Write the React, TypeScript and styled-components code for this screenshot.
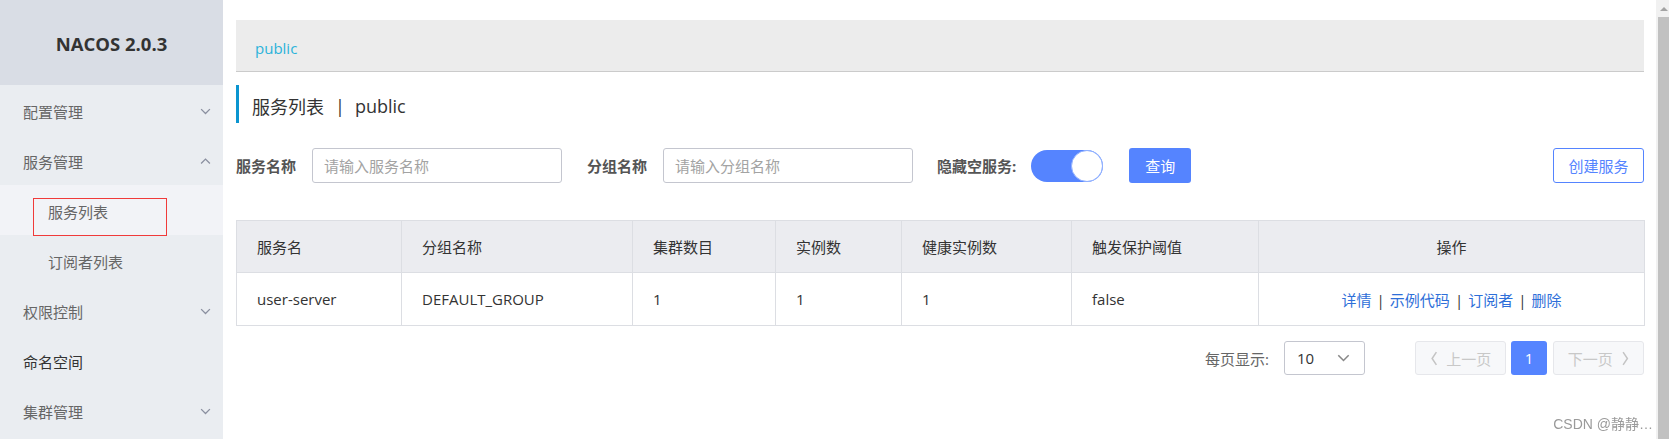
import React from "react";
import styled, { createGlobalStyle } from "styled-components";

const GlobalStyle = createGlobalStyle`
  html, body {
    margin: 0;
    padding: 0;
    height: 100%;
    overflow: hidden;
  }
  body {
    font-family: "Open Sans", "Noto Sans CJK SC", sans-serif;
    color: #333;
    background: #fff;
  }
  * {
    box-sizing: border-box;
  }
`;

type MenuEntry = {
  label: string;
  arrow?: "up" | "down";
  sub?: boolean;
  active?: boolean;
  dark?: boolean;
};

const menu: MenuEntry[] = [
  { label: "配置管理", arrow: "down" },
  { label: "服务管理", arrow: "up" },
  { label: "服务列表", sub: true, active: true },
  { label: "订阅者列表", sub: true },
  { label: "权限控制", arrow: "down" },
  { label: "命名空间", dark: true },
  { label: "集群管理", arrow: "down" },
];

const columns = [
  { title: "服务名", width: 165 },
  { title: "分组名称", width: 231 },
  { title: "集群数目", width: 143 },
  { title: "实例数", width: 126 },
  { title: "健康实例数", width: 170 },
  { title: "触发保护阈值", width: 187 },
  { title: "操作", width: 386, center: true },
];

const rows = [["user-server", "DEFAULT_GROUP", "1", "1", "1", "false"]];

const ops = ["详情", "示例代码", "订阅者", "删除"];

const Chevron = ({
  dir,
  size = 10,
  color = "#8b90a0",
  stroke = 1.2,
}: {
  dir: "up" | "down" | "left" | "right";
  size?: number;
  color?: string;
  stroke?: number;
}) => {
  const pts: Record<string, string> = {
    down: "1,1 5,5 9,1",
    up: "1,5 5,1 9,5",
    left: "5,1 1,7 5,13",
    right: "1,1 5,7 1,13",
  };
  const vertical = dir === "left" || dir === "right";
  return (
    <svg
      width={vertical ? size * 0.5 + 1 : size}
      height={vertical ? size : size * 0.6}
      viewBox={vertical ? "0 0 6 14" : "0 0 10 6"}
      fill="none"
    >
      <polyline points={pts[dir]} stroke={color} strokeWidth={stroke} />
    </svg>
  );
};

const App = () => {
  return (
    <>
      <GlobalStyle />
      <Page>
        <Sidebar>
          <Brand>NACOS 2.0.3</Brand>
          <Menu>
            {menu.map((m) => (
              <MenuItem key={m.label} $sub={m.sub} $active={m.active} $dark={m.dark}>
                <span>{m.label}</span>
                {m.arrow && <Chevron dir={m.arrow} size={11} />}
                {m.active && <Marker />}
              </MenuItem>
            ))}
          </Menu>
        </Sidebar>

        <Main>
          <Breadcrumb>public</Breadcrumb>
          <Title>
            服务列表<TitleSep>|</TitleSep>public
          </Title>

          <Filters>
            <Label>服务名称</Label>
            <TextInput placeholder="请输入服务名称" />
            <Label $gap={25}>分组名称</Label>
            <TextInput placeholder="请输入分组名称" />
            <Label $gap={24}>隐藏空服务:</Label>
            <Switch>
              <Knob />
            </Switch>
            <PrimaryButton>查询</PrimaryButton>
            <OutlineButton>创建服务</OutlineButton>
          </Filters>

          <Table>
            <colgroup>
              {columns.map((c) => (
                <Col key={c.title} $w={c.width} />
              ))}
            </colgroup>
            <thead>
              <tr>
                {columns.map((c) => (
                  <Th key={c.title} $center={c.center}>
                    {c.title}
                  </Th>
                ))}
              </tr>
            </thead>
            <tbody>
              {rows.map((r) => (
                <tr key={r[0]}>
                  {r.map((v, i) => (
                    <Td key={i}>{v}</Td>
                  ))}
                  <Td $center>
                    {ops.map((o, i) => (
                      <React.Fragment key={o}>
                        {i > 0 && <OpSep>|</OpSep>}
                        <OpLink>{o}</OpLink>
                      </React.Fragment>
                    ))}
                  </Td>
                </tr>
              ))}
            </tbody>
          </Table>

          <Pager>
            <PagerLabel>每页显示:</PagerLabel>
            <Select>
              <span>10</span>
              <Chevron dir="down" size={13} color="#888" />
            </Select>
            <PageButton $disabled $gap={50}>
              <Chevron dir="left" size={15} color="#c4c4c4" stroke={1.4} />
              上一页
            </PageButton>
            <PageNumber>1</PageNumber>
            <PageButton $disabled $gap={6}>
              下一页
              <Chevron dir="right" size={15} color="#c4c4c4" stroke={1.4} />
            </PageButton>
          </Pager>
        </Main>

        <Scrollbar>
          <ScrollArrow />
          <ScrollThumb />
        </Scrollbar>
      </Page>
      <Watermark>CSDN @静静…</Watermark>
    </>
  );
};

const Page = styled.div`
  display: flex;
  height: 100vh;
`;

const Sidebar = styled.div`
  width: 223px;
  flex-shrink: 0;
  background: #eaedf1;
`;

const Brand = styled.div`
  height: 85px;
  background: #d9dde5;
  display: flex;
  align-items: center;
  justify-content: center;
  font-size: 18.5px;
  font-weight: 700;
  color: #333;
  padding-top: 1px;
`;

const Menu = styled.div`
  display: flex;
  flex-direction: column;
`;

const MenuItem = styled.div<{ $sub?: boolean; $active?: boolean; $dark?: boolean }>`
  position: relative;
  height: 50px;
  display: flex;
  align-items: center;
  justify-content: space-between;
  padding: 3px 12px 0 ${(p) => (p.$sub ? 48 : 23)}px;
  font-size: 15px;
  color: ${(p) => (p.$dark ? "#333" : "#666")};
  background: ${(p) => (p.$active ? "#f2f3f7" : "transparent")};
`;

const Marker = styled.div`
  position: absolute;
  left: 33px;
  top: 13px;
  width: 134px;
  height: 38px;
  border: 1px solid #f03a3a;
`;

const Main = styled.div`
  flex: 1;
  min-width: 0;
  padding: 20px 12px 0 13px;
  display: flex;
  flex-direction: column;
`;

const Breadcrumb = styled.div`
  height: 52px;
  background: #ececec;
  border-bottom: 1px solid #cbcbcb;
  display: flex;
  align-items: center;
  padding: 4px 0 0 19px;
  font-size: 15px;
  color: #2bb3da;
`;

const Title = styled.div`
  margin-top: 13px;
  height: 38px;
  border-left: 3px solid #0b95d0;
  padding: 4px 0 0 13px;
  display: flex;
  align-items: center;
  font-size: 18px;
  color: #333;
`;

const TitleSep = styled.span`
  margin: 0 10px 0 11px;
`;

const Filters = styled.div`
  margin-top: 25px;
  height: 35px;
  display: flex;
  align-items: center;
`;

const Label = styled.span<{ $gap?: number }>`
  margin-left: ${(p) => p.$gap ?? 0}px;
  margin-right: 16px;
  font-size: 15px;
  font-weight: 700;
  color: #555;
`;

const TextInput = styled.input`
  width: 250px;
  height: 35px;
  border: 1px solid #c4c6cf;
  border-radius: 3px;
  padding: 0 11px;
  font-family: inherit;
  font-size: 15px;
  color: #333;
  outline: none;
  &::placeholder {
    color: #a3a3a3;
  }
`;

const Switch = styled.div`
  width: 72px;
  height: 32px;
  border-radius: 16px;
  background: #5584ff;
  display: flex;
  justify-content: flex-end;
  margin-left: -1px;
`;

const Knob = styled.div`
  width: 32px;
  height: 32px;
  border-radius: 50%;
  background: #fff;
  border: 1px solid #8fb0ff;
`;

const PrimaryButton = styled.button`
  margin-left: 26px;
  width: 62px;
  height: 35px;
  border: none;
  border-radius: 3px;
  background: #5584ff;
  color: #fff;
  font-family: inherit;
  font-size: 15px;
  padding: 0;
`;

const OutlineButton = styled.button`
  margin-left: auto;
  width: 91px;
  height: 35px;
  border: 1px solid #5584ff;
  border-radius: 3px;
  background: #fff;
  color: #5584ff;
  font-family: inherit;
  font-size: 15px;
  padding: 0;
`;

const Table = styled.table`
  margin-top: 37px;
  width: 100%;
  border-collapse: collapse;
  table-layout: fixed;
  font-size: 15px;
  color: #333;
`;

const Col = styled.col<{ $w: number }>`
  width: ${(p) => p.$w}px;
`;

const Th = styled.th<{ $center?: boolean }>`
  height: 52px;
  padding: 0 20px;
  background: #ebecf0;
  border: 1px solid #dcdee3;
  font-weight: 400;
  text-align: ${(p) => (p.$center ? "center" : "left")};
`;

const Td = styled.td<{ $center?: boolean }>`
  height: 53px;
  padding: 0 20px;
  border: 1px solid #dcdee3;
  text-align: ${(p) => (p.$center ? "center" : "left")};
`;

const OpLink = styled.a`
  color: #2e6fd9;
  cursor: pointer;
`;

const OpSep = styled.span`
  margin: 0 5px;
  color: #333;
`;

const Pager = styled.div`
  margin-top: 15px;
  height: 34px;
  display: flex;
  align-items: center;
  justify-content: flex-end;
`;

const PagerLabel = styled.span`
  font-size: 15px;
  color: #666;
`;

const Select = styled.div`
  margin-left: 15px;
  width: 81px;
  height: 34px;
  border: 1px solid #c4c6cf;
  border-radius: 3px;
  display: flex;
  align-items: center;
  justify-content: space-between;
  padding: 0 14px 0 12px;
  font-size: 15px;
  color: #333;
`;

const PageButton = styled.div<{ $disabled?: boolean; $gap?: number }>`
  margin-left: ${(p) => p.$gap ?? 0}px;
  width: 91px;
  height: 34px;
  border: 1px solid #e6e7eb;
  border-radius: 3px;
  background: #f7f8fa;
  display: flex;
  align-items: center;
  justify-content: center;
  gap: 8px;
  font-size: 15px;
  color: ${(p) => (p.$disabled ? "#c8c8c8" : "#333")};
`;

const PageNumber = styled.div`
  margin-left: 5px;
  width: 36px;
  height: 34px;
  border-radius: 3px;
  background: #5584ff;
  color: #fff;
  display: flex;
  align-items: center;
  justify-content: center;
  font-size: 15px;
`;

const Scrollbar = styled.div`
  width: 13px;
  flex-shrink: 0;
  background: #f1f1f1;
  display: flex;
  flex-direction: column;
  align-items: flex-end;
`;

const ScrollArrow = styled.div`
  height: 17px;
  width: 11px;
  display: flex;
  align-items: center;
  justify-content: center;
  &::before {
    content: "";
    border-left: 4px solid transparent;
    border-right: 4px solid transparent;
    border-bottom: 4px solid #a3a3a3;
  }
`;

const ScrollThumb = styled.div`
  flex: 1;
  width: 11px;
  background: #c1c1c1;
`;

const Watermark = styled.div`
  position: fixed;
  right: 16px;
  bottom: 6px;
  font-family: "Liberation Sans", "Noto Sans CJK SC", sans-serif;
  font-size: 14px;
  color: #9a9a9a;
`;

export default App;
